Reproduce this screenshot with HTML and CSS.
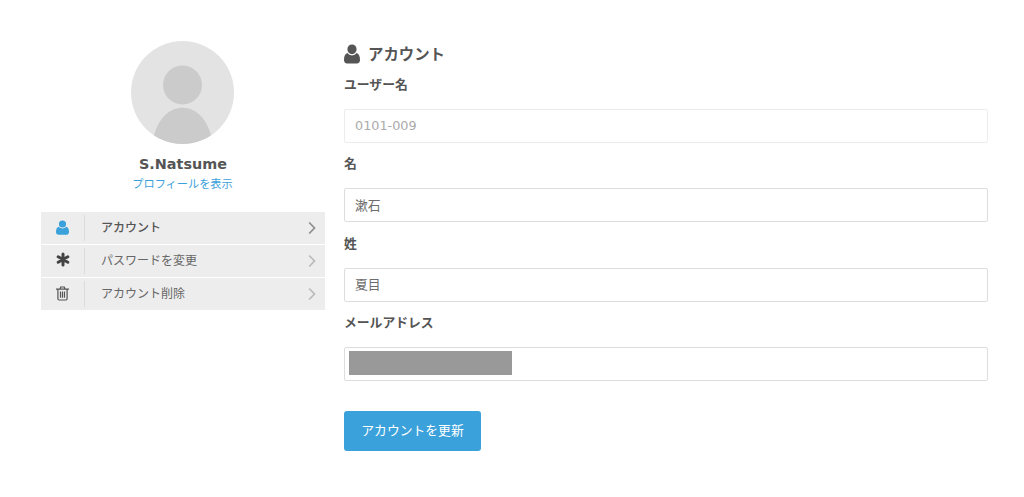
FILE: index.html
```html
<!DOCTYPE html>
<html lang="ja">
<head>
  <meta charset="UTF-8">
  <meta name="viewport" content="width=device-width, initial-scale=1.0">
  <title>アカウント</title>
  <link rel="stylesheet" href="styles.css">
</head>
<body>
  <div class="account">
    <div class="side">
      <svg class="avatar" viewBox="0 0 102 102">
        <defs><clipPath id="round"><circle cx="51" cy="51" r="51"/></clipPath></defs>
        <circle cx="51" cy="51" r="51" fill="#e3e3e3"/>
        <g clip-path="url(#round)" fill="#cbcbcb">
          <circle cx="51" cy="43.5" r="19.3"/>
          <path d="M21 102C24 81 35 66 51 66s27 15 30 36z"/>
        </g>
      </svg>
      <div class="name">S.Natsume</div>
      <a class="profile-link">プロフィールを表示</a>
      <ul class="menu">
        <li class="current">
          <span class="icon"><svg width="13" height="15" viewBox="0 0 13 15"><circle cx="6.5" cy="4" r="3.6"/><path d="M2.700 6.800C.8 7.400 0 9.300 0 12c0 1.600 1 2.700 2.500 2.700h8C12 14.700 13 13.600 13 12c0-2.700-.8-4.600-2.700-5.200a4.900 4.900 0 0 1-7.600 0z"/></svg></span>
          <span class="text">アカウント</span>
          <svg class="arrow" width="8" height="14" viewBox="0 0 8 14"><path d="M1.200 1.500 6.500 7l-5.300 5.500"/></svg>
        </li>
        <li>
          <span class="icon"><svg width="14" height="16" viewBox="0 0 14 16"><path class="star" d="M7 2v11M2.200 4.800l9.600 5.400M11.800 4.800l-9.600 5.400"/></svg></span>
          <span class="text">パスワードを変更</span>
          <svg class="arrow" width="8" height="14" viewBox="0 0 8 14"><path d="M1.200 1.500 6.500 7l-5.300 5.500"/></svg>
        </li>
        <li>
          <span class="icon"><svg width="13" height="15" viewBox="0 0 13 15"><path class="line" d="M0 3.200h13M4 3l.7-2h3.600L9 3M1.900 3.500v9c0 .9.500 1.500 1.200 1.500h6.800c.7 0 1.200-.6 1.200-1.500v-9M4.500 5.500v6.300M6.500 5.500v6.300M8.500 5.500v6.300"/></svg></span>
          <span class="text">アカウント削除</span>
          <svg class="arrow" width="8" height="14" viewBox="0 0 8 14"><path d="M1.200 1.500 6.500 7l-5.300 5.500"/></svg>
        </li>
      </ul>
    </div>

    <form class="main">
      <h1>
        <svg width="16" height="20" viewBox="0 0 13 15" preserveAspectRatio="none"><circle cx="6.500" cy="4" r="3.700"/><path d="M2.700 6.800C.8 7.400 0 9.300 0 12c0 1.600 1 2.700 2.500 2.700h8C12 14.700 13 13.600 13 12c0-2.700-.8-4.600-2.700-5.200a4.900 4.900 0 0 1-7.600 0z"/></svg>
        <span>アカウント</span>
      </h1>
      <div class="field">
        <label for="user">ユーザー名</label>
        <input id="user" type="text" value="0101-009" disabled>
      </div>
      <div class="field">
        <label for="first">名</label>
        <input id="first" type="text" value="漱石">
      </div>
      <div class="field">
        <label for="last">姓</label>
        <input id="last" type="text" value="夏目">
      </div>
      <div class="field">
        <label>メールアドレス</label>
        <div class="box"><span class="mask"></span></div>
      </div>
      <button type="button">アカウントを更新</button>
    </form>
  </div>
</body>
</html>
```

FILE: styles.css
```css
* {
  box-sizing: border-box;
}
body {
  margin: 0;
  background: #fff;
  color: #555;
  font-family: "DejaVu Sans", "Noto Sans CJK JP", sans-serif;
  font-size: 12.8px;
}
.account {
  display: flex;
  gap: 19px;
  width: 947px;
  margin-left: 41px;
  padding-top: 41px;
}
.side {
  display: flex;
  flex-direction: column;
  align-items: center;
  width: 284px;
}
.avatar {
  width: 103px;
  height: 103px;
  margin-right: 1px;
}
.name {
  margin-top: 10px;
  font-size: 14.4px;
  font-weight: bold;
  line-height: 20px;
}
.profile-link {
  margin-top: -1px;
  margin-right: 1px;
  color: #3ba1da;
  font-family: "Noto Sans CJK JP", sans-serif;
  font-size: 11.2px;
  line-height: 20px;
}
.menu {
  display: grid;
  gap: 1.2px;
  width: 100%;
  margin: 18.5px 0 0;
  padding: 0;
  list-style: none;
  font-family: "Noto Sans CJK JP", sans-serif;
  font-size: 12px;
}
.menu li {
  display: flex;
  align-items: center;
  height: 32px;
  padding-right: 9px;
  background: #ededed;
  color: #666;
}
.icon {
  display: flex;
  align-items: center;
  justify-content: center;
  width: 44px;
  height: 26px;
  border-right: 1px solid #dcdcdc;
  fill: #444;
}
.icon svg {
  margin-top: -1px;
}
.text {
  flex: 1;
  padding-left: 16px;
  line-height: 20px;
  margin-top: -2px;
}
.star {
  stroke: #444;
  stroke-width: 3;
  stroke-linecap: round;
}
.line {
  fill: none;
  stroke: #555;
  stroke-width: 1.2;
}
.arrow {
  margin-top: 1px;
  fill: none;
  stroke: #bbb;
  stroke-width: 1.8;
}
.current .text {
  color: #555;
  font-weight: 500;
}
.current .icon {
  fill: #3ba1da;
}
.current .arrow {
  stroke: #909090;
}
.main {
  flex: 1;
}
h1 {
  display: flex;
  align-items: center;
  gap: 8px;
  height: 20px;
  margin: 0 0 14px;
  padding-top: 7px;
  font-size: 15.4px;
  font-weight: bold;
}
h1 svg {
  margin-top: -1px;
  fill: #555;
}
h1 span {
  margin-top: -3px;
}
.field {
  height: 79.3px;
}
.field label {
  display: block;
  height: 34px;
  font-weight: bold;
  line-height: 20px;
}
.field input,
.box {
  display: block;
  width: 100%;
  height: 34px;
  padding: 0 10px 2px;
  border: 1px solid #ddd;
  border-radius: 2px;
  background: #fff;
  color: #6c6c6c;
  font-family: inherit;
  font-size: 12.8px;
}
.field input:disabled {
  border-color: #ececec;
  color: #aaa;
}
.box {
  padding: 3px 4px;
}
.mask {
  display: block;
  width: 163px;
  height: 24px;
  background: #999;
}
button {
  display: block;
  width: 137px;
  height: 40px;
  margin-top: 19px;
  padding: 0 0 4px;
  border: 0;
  border-radius: 3px;
  background: #3ba1da;
  color: #fff;
  font-family: "Noto Sans CJK JP", sans-serif;
  font-size: 12.8px;
}
```
